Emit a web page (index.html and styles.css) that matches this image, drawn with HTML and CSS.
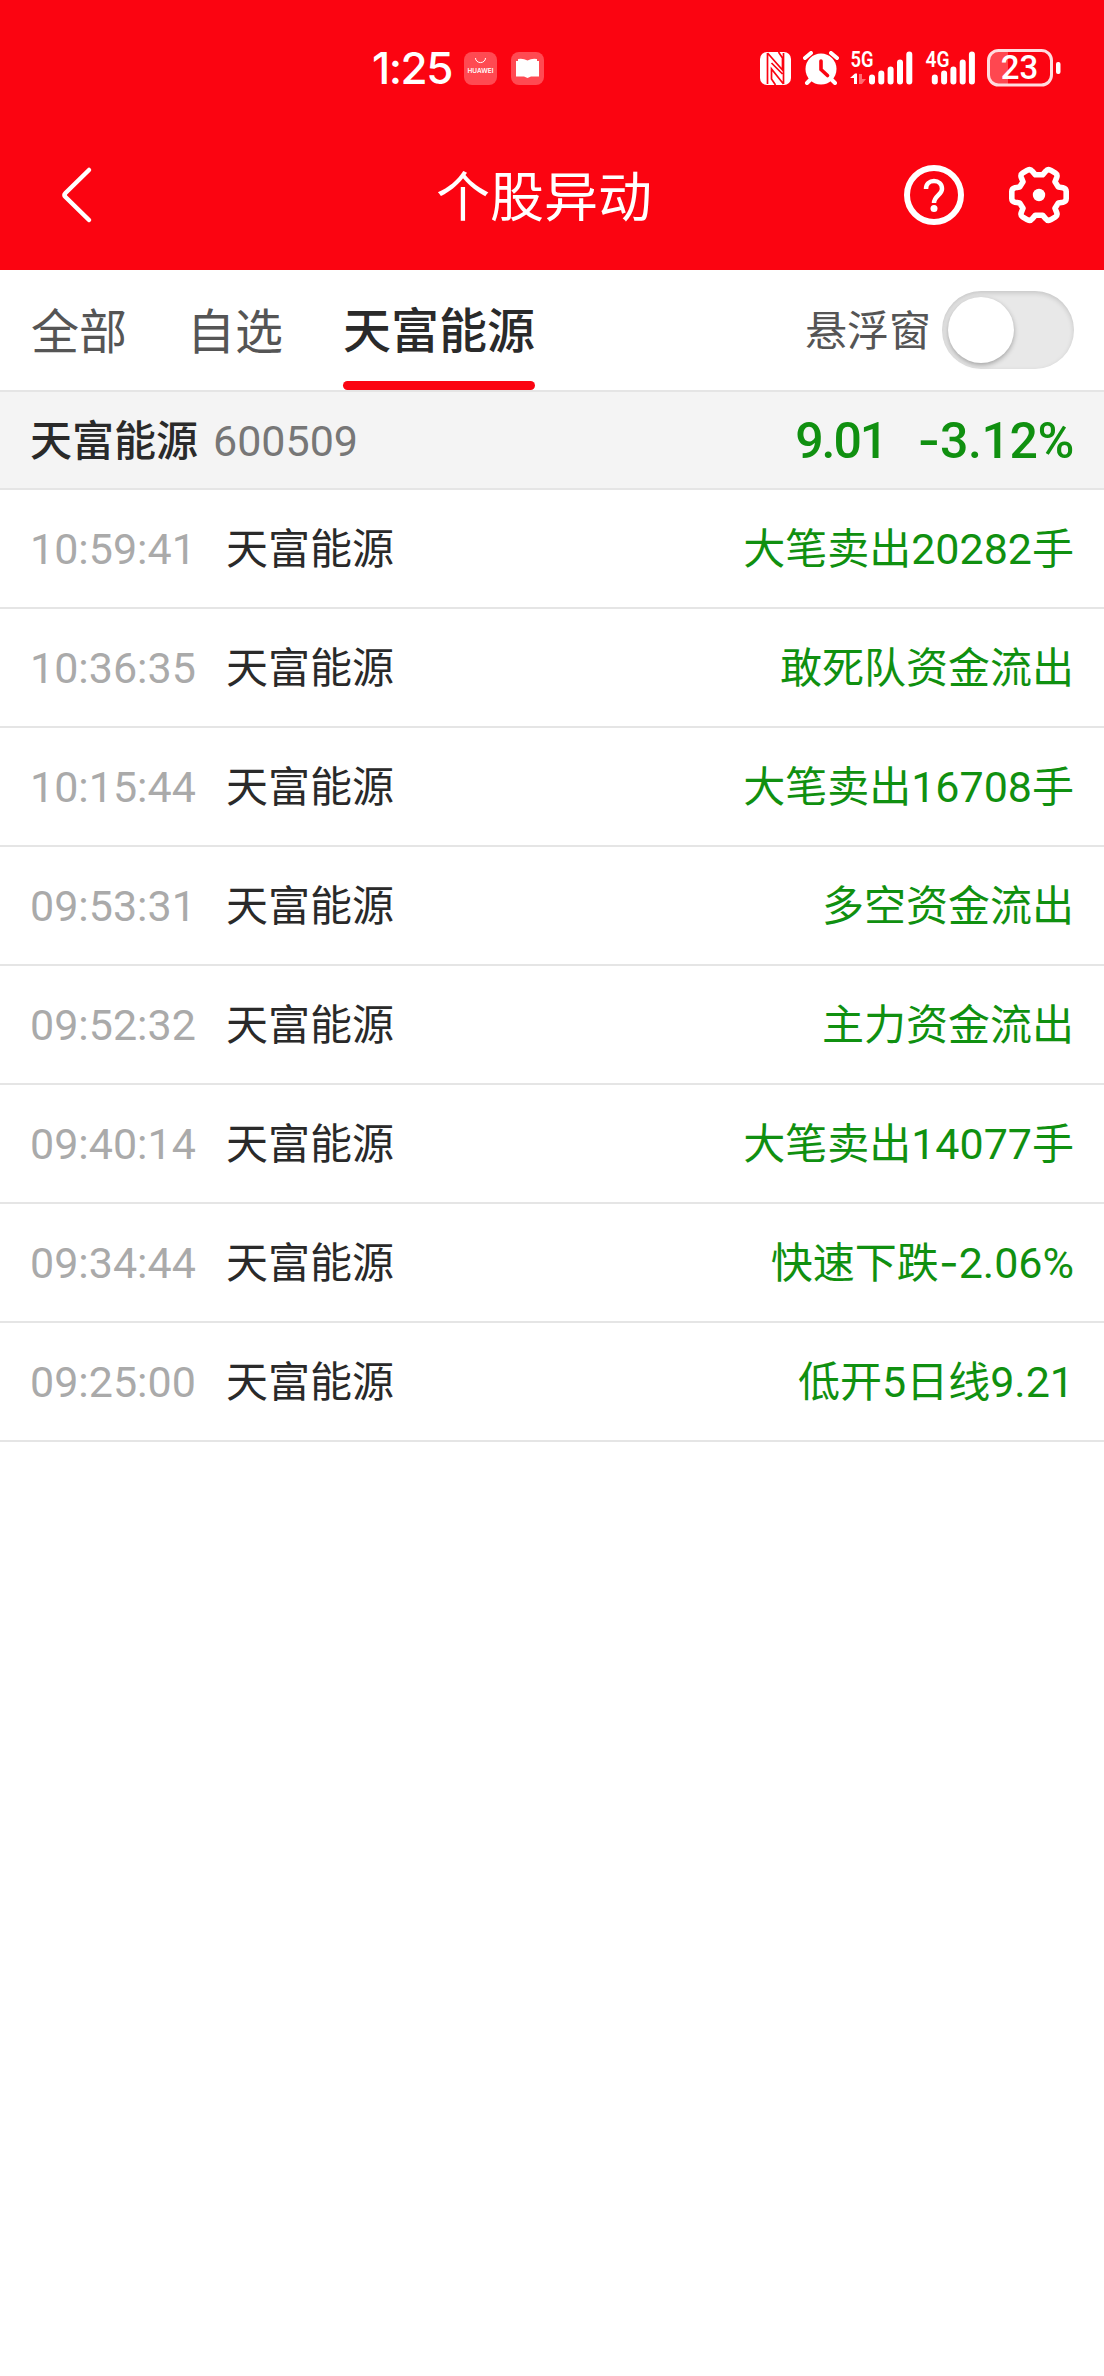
FILE: index.html
```html
<!DOCTYPE html>
<html lang="zh-CN">
<head>
  <meta charset="UTF-8">
  <title>个股异动</title>
  <meta name="viewport" content="width=device-width, initial-scale=1.0">
  <link rel="stylesheet" href="styles.css">
</head>
<body>
  <header>
    <div class="status">
      <div class="status-left">
        <span class="clock">1:25</span>
        <svg class="app" width="33" height="33" viewBox="0 0 33 33">
          <rect width="33" height="33" rx="8" fill="#ff4a52"/>
          <path d="M11.5 6a5 4.6 0 0 0 10 0" fill="none" stroke="#fff" stroke-width="1"/>
          <text x="3.5" y="21.3" textLength="26" lengthAdjust="spacingAndGlyphs" class="brand">HUAWEI</text>
        </svg>
        <svg class="app" width="33" height="33" viewBox="0 0 33 33">
          <rect width="33" height="33" rx="8" fill="#ff4a52"/>
          <path d="M7 7q5-1 9.500 1.500q4.500-2.500 9.500-1.500v2h2v15.500h-8l-3.500 1.500l-3.500-1.500h-8V9h2z" fill="#fff"/>
        </svg>
      </div>
      <div class="status-right">
        <svg class="nfc" width="31" height="33" viewBox="0 0 31 33">
          <rect width="31" height="33" rx="7" fill="#fff"/>
          <path d="M7.500 1v31M7.500 1l15 17V6l-4-6M23.500 32v-31M23.500 32L11.500 17v10l4 6M11.500 11l11 11" fill="none" stroke="#fb0411" stroke-width="1.700"/>
        </svg>
        <svg class="alarm" width="36" height="34" viewBox="0 0 36 34">
          <circle cx="18" cy="18" r="15.500" fill="#fff"/>
          <path d="M2 7l6-5M34 7l-6-5M8 28l-4 4M28 28l4 4" stroke="#fff" stroke-width="4" stroke-linecap="round"/>
          <path d="M18 10v8.500l6.500 6" fill="none" stroke="#fb0411" stroke-width="3.600" stroke-linecap="round"/>
        </svg>
        <svg class="signal" width="63" height="40" viewBox="0 -5 63 40">
          <text x="0.500" y="17" textLength="23" lengthAdjust="spacingAndGlyphs" class="net">5G</text>
          <path d="M0 28l5-4.500h2V34H4v-6z" fill="#fff"/>
          <path d="M9 24h3v5h4l-4 5H9z" fill="#ff6a70"/>
          <path d="M22 27.500v4M31.300 23.500v8M40.600 19.500v12M50 12.500v19M59.300 4.500v27" stroke="#fff" stroke-width="6" stroke-linecap="round"/>
        </svg>
        <svg class="signal" width="50" height="40" viewBox="0 -5 50 40">
          <text x="0.500" y="17" textLength="24" lengthAdjust="spacingAndGlyphs" class="net">4G</text>
          <path d="M9.800 27.500v4M19.100 23.500v8M28.400 19.500v12M37.700 12.500v19M46.900 4.500v27" stroke="#fff" stroke-width="6" stroke-linecap="round"/>
        </svg>
        <svg class="battery" width="74" height="38" viewBox="0 0 74 38">
          <path d="M11 2h10v34H11q-9 0-9-9V11q0-9 9-9z" fill="#ff4750"/>
          <rect x="1.500" y="1.500" width="63" height="34.500" rx="10" fill="none" stroke="#ffdcde" stroke-width="3"/>
          <rect x="69" y="13" width="4.500" height="12" rx="2" fill="#fff"/>
          <text x="32.500" y="30" text-anchor="middle" class="level">23</text>
        </svg>
      </div>
    </div>
    <div class="navbar">
      <svg class="back" width="34" height="58" viewBox="0 0 34 58">
        <path d="M29 4L5.500 27q-2 2 0 4L29 54" fill="none" stroke="#fff" stroke-width="4.500" stroke-linecap="round"/>
      </svg>
      <h1>个股异动</h1>
      <svg class="help" width="60" height="60" viewBox="0 0 60 60">
        <circle cx="30" cy="30" r="27" fill="none" stroke="#fff" stroke-width="6"/>
        <path d="M22 24c0-5 3.500-8 8-8s8 3 8 8c0 5.500-8 7-8 14" fill="none" stroke="#fff" stroke-width="4.500"/>
        <circle cx="30" cy="43.500" r="3.500" fill="#fff"/>
      </svg>
      <svg class="gear" width="62" height="60" viewBox="-31 -30 62 60">
        <path d="M19.300 -8L24 -7.300Q27.200 -6.500 27.200 -3.500V3.500Q27.200 6.500 24 7.300L19.300 8L16 13.200L17.700 17.500Q18.700 20.400 16.500 21.800L11.500 24.800Q8.600 26.200 6.800 23.800L3.600 20.200H-3.600L-6.800 23.800Q-8.600 26.200 -11.500 24.800L-16.500 21.800Q-18.700 20.400 -17.700 17.500L-16 13.200L-19.300 8L-24 7.300Q-27.200 6.500 -27.200 3.500V-3.500Q-27.200 -6.500 -24 -7.300L-19.300 -8L-16 -13.200L-17.700 -17.500Q-18.700 -20.400 -16.500 -21.800L-11.500 -24.800Q-8.600 -26.200 -6.800 -23.800L-3.600 -20.200H3.600L6.800 -23.800Q8.600 -26.200 11.500 -24.800L16.500 -21.800Q18.700 -20.400 17.700 -17.500L16 -13.200Z" fill="none" stroke="#fff" stroke-width="5.600" stroke-linejoin="round"/>
        <circle r="6.200" fill="#fff"/>
      </svg>
    </div>
  </header>

  <nav class="tabs">
    <span class="tab">全部</span>
    <span class="tab">自选</span>
    <span class="tab active">天富能源</span>
    <span class="float-label">悬浮窗</span>
    <span class="switch"><i></i></span>
  </nav>

  <div class="summary">
    <b>天富能源</b>
    <span class="code num">600509</span>
    <span class="price num">9.01</span>
    <span class="change num"><span class="minus">-</span>3.12%</span>
  </div>

  <ul class="list">
    <li><time class="num">10:59:41</time><span>天富能源</span><em>大笔卖出<span class="num">20282</span>手</em></li>
    <li><time class="num">10:36:35</time><span>天富能源</span><em>敢死队资金流出</em></li>
    <li><time class="num">10:15:44</time><span>天富能源</span><em>大笔卖出<span class="num">16708</span>手</em></li>
    <li><time class="num">09:53:31</time><span>天富能源</span><em>多空资金流出</em></li>
    <li><time class="num">09:52:32</time><span>天富能源</span><em>主力资金流出</em></li>
    <li><time class="num">09:40:14</time><span>天富能源</span><em>大笔卖出<span class="num">14077</span>手</em></li>
    <li><time class="num">09:34:44</time><span>天富能源</span><em>快速下跌<span class="num"><span class="minus">-</span>2.06%</span></em></li>
    <li><time class="num">09:25:00</time><span>天富能源</span><em>低开<span class="num">5</span>日线<span class="num">9.21</span></em></li>
  </ul>
</body>
</html>
```
FILE: styles.css
```css
* { box-sizing: border-box; }
body { margin: 0; background: #fff; color: #2a2a2a; font-family: "Noto Sans CJK SC", sans-serif; font-size: 42px; line-height: 60px; }
svg { display: block; flex: none; }
.num { font-family: Roboto, sans-serif; font-size: 43px; }
.minus { font-family: Inter, sans-serif; }

header { height: 270px; background: #fb0411; color: #fff; }
.status { display: flex; justify-content: space-between; height: 136px; padding: 0 43px 0 372px; }
.status-left, .status-right { display: flex; align-items: center; }
.clock { width: 92px; font-family: Inter, sans-serif; font-size: 44px; font-weight: 500; letter-spacing: -1.5px; }
.app { margin-right: 14px; }
.brand { font: 600 6.5px Inter, sans-serif; fill: #fff; }
.alarm { margin: -1px -1px 0 12px; }
.signal { margin: -6px 0 0 12px; }
.net { font: 600 22px Roboto, sans-serif; fill: #fff; }
.battery { margin: -1px 0 0 12px; }
.level { font: 500 33px Roboto, sans-serif; fill: #fff; }

.navbar { display: flex; align-items: center; height: 118px; padding: 0 35px 0 60px; }
.navbar h1 { margin: 0 252px 2px 342px; font-size: 54px; font-weight: 400; line-height: 80px; white-space: nowrap; }
.gear { margin-left: 44px; }

.tabs { display: flex; align-items: center; height: 122px; padding: 0 30px 0 31px; border-bottom: 2px solid #e5e5e5; }
.tab { height: 120px; margin-right: 60px; font-size: 48px; line-height: 116px; color: #555; }
.tab.active { display: flex; flex-direction: column; margin-right: 0; padding-top: 2px; color: #2a2a2a; font-weight: 500; line-height: 111px; }
.tab.active::after { content: ""; height: 9px; margin-top: -2px; border-radius: 5px; background: #fb0411; }
.float-label { margin: 0 0 4px auto; color: #555; }
.switch { width: 132px; height: 78px; margin-left: 11px; padding: 6px; border-radius: 39px; background: #e8e8e8; box-shadow: inset 0 2px 5px rgba(0, 0, 0, 0.15); }
.switch i { display: block; width: 66px; height: 66px; border-radius: 50%; background: #fff; box-shadow: 0 2px 5px rgba(0, 0, 0, 0.3); }

.summary { display: flex; align-items: baseline; height: 98px; padding: 16px 30px 0 30px; border-bottom: 2px solid #e5e5e5; background: #f4f4f4; }
.summary b { font-weight: 500; }
.code { margin-left: 15px; color: #777; }
.price, .change { align-self: center; padding-bottom: 15px; font-size: 50px; font-weight: 500; color: #109010; }
.price { margin-left: auto; letter-spacing: -2px; }
.change { margin-left: 31px; letter-spacing: -0.4px; }

.list { margin: 0; padding: 0; list-style: none; }
.list li { display: flex; align-items: baseline; height: 119px; padding: 26px 30px 0 30px; border-bottom: 2px solid #e5e5e5; }
.list time { width: 196px; color: #aaa; }
.list em { margin-left: auto; color: #109010; font-style: normal; }
```
